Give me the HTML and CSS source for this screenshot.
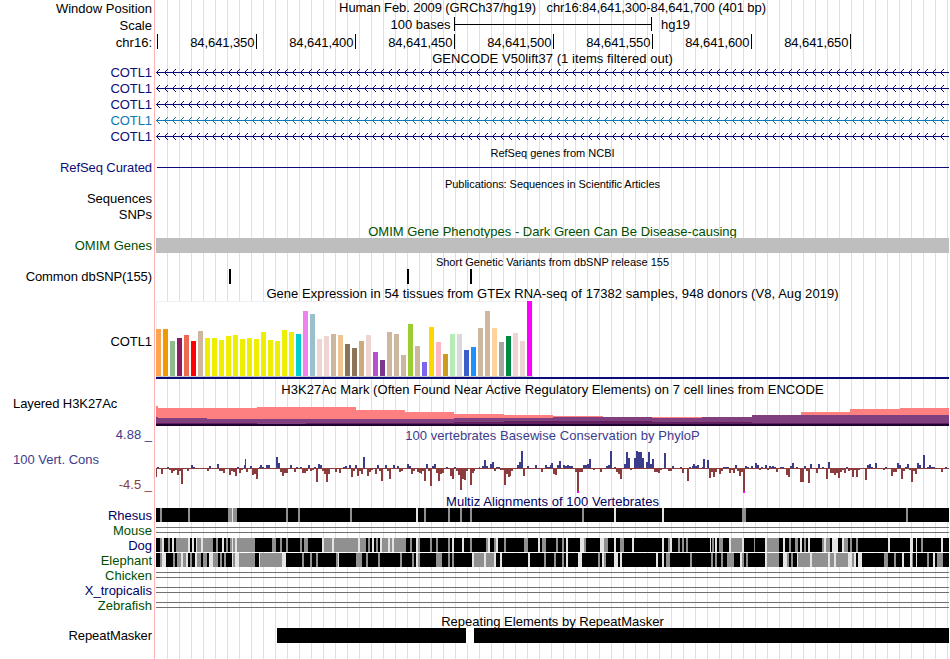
FILE: index.html
```html
<!DOCTYPE html>
<html lang="en">
<head>
<meta charset="utf-8">
<title>Human chr16:84,641,300-84,641,700</title>
<link rel="stylesheet" href="styles.css">
</head>
<body>
<main class="browser">
  <section class="row h17"><div class="label low">Window Position</div><div class="title pre tight">Human Feb. 2009 (GRCh37/hg19)   chr16:84,641,300-84,641,700 (401 bp)</div></section>
  <section class="row h17"><div class="label low">Scale</div><svg id="scale"></svg></section>
  <section class="row h17"><div class="label low">chr16:</div><svg id="ruler"></svg></section>
  <section class="row h14"><div></div><div class="title loose">GENCODE V50lift37 (1 items filtered out)</div></section>
  <section class="row h16 navy"><div class="label tight">COTL1</div><svg class="gene"></svg></section>
  <section class="row h16 navy"><div class="label tight">COTL1</div><svg class="gene"></svg></section>
  <section class="row h16 navy"><div class="label tight">COTL1</div><svg class="gene"></svg></section>
  <section class="row h16 azure"><div class="label tight">COTL1</div><svg class="gene"></svg></section>
  <section class="row h16 navy"><div class="label tight">COTL1</div><svg class="gene"></svg></section>
  <section class="row h15"><div></div><div class="title small">RefSeq genes from NCBI</div></section>
  <section class="row h16 navy"><div class="label tight">RefSeq Curated</div><svg id="refseq"></svg></section>
  <section class="row h15"><div></div><div class="title small tight">Publications: Sequences in Scientific Articles</div></section>
  <section class="row h16"><div class="label">Sequences</div></section>
  <section class="row h16"><div class="label">SNPs</div></section>
  <section class="row h15 green"><div></div><div class="title low">OMIM Gene Phenotypes - Dark Green Can Be Disease-causing</div></section>
  <section class="row h16 green"><div class="label">OMIM Genes</div><svg id="omim"></svg></section>
  <section class="row h15"><div></div><div class="title small">Short Genetic Variants from dbSNP release 155</div></section>
  <section class="row h16"><div class="label tight">Common dbSNP(155)</div><svg id="snp"></svg></section>
  <section class="row h16"><div></div><div class="title low loose">Gene Expression in 54 tissues from GTEx RNA-seq of 17382 samples, 948 donors (V8, Aug 2019)</div></section>
  <section class="row h79"><div class="label middle tight">COTL1</div><svg id="gtex"></svg></section>
  <section class="row h16"><div></div><div class="title lower loose">H3K27Ac Mark (Often Found Near Active Regulatory Elements) on 7 cell lines from ENCODE</div></section>
  <section class="row h32"><div class="label left tight">Layered H3K27Ac</div><svg id="h3k"></svg></section>
  <section class="row h66">
    <div class="axis">
      <div class="label blue">4.88 _</div>
      <div class="label left blue">100 Vert. Cons</div>
      <div class="label maroon">-4.5 _</div>
    </div>
    <div class="plot"><div class="title blue loose">100 vertebrates Basewise Conservation by PhyloP</div><svg id="cons"></svg></div>
  </section>
  <section class="row h14"><div></div><div class="title deep loose">Multiz Alignments of 100 Vertebrates</div></section>
  <section class="row h15"><div class="label deep">Rhesus</div><svg id="rhesus"></svg></section>
  <section class="row h15"><div class="label green">Mouse</div><svg class="gap"></svg></section>
  <section class="row h15"><div class="label deep">Dog</div><svg id="dog"></svg></section>
  <section class="row h15"><div class="label green">Elephant</div><svg id="elephant"></svg></section>
  <section class="row h15"><div class="label green">Chicken</div><svg class="gap"></svg></section>
  <section class="row h15"><div class="label deep">X_tropicalis</div><svg class="gap"></svg></section>
  <section class="row h15"><div class="label green">Zebrafish</div><svg class="gap"></svg></section>
  <section class="row h15"><div></div><div class="title low">Repeating Elements by RepeatMasker</div></section>
  <section class="row h31"><div class="label tight">RepeatMasker</div><svg id="repeats"></svg></section>
</main>
<script src="tracks.js"></script>
</body>
</html>
```
FILE: styles.css
```css
* { box-sizing: border-box; }
body { margin: 0; background: #fff; color: #000; font: 13px/15px "Liberation Sans", Arial, sans-serif; overflow: hidden; }
.browser {
  width: 950px;
  height: 659px;
  background:
    linear-gradient(#ffb4b4, #ffb4b4) 154px 0 / 1px 100% no-repeat,
    repeating-linear-gradient(90deg, transparent 0 11px, #dcdcff 11px 12px) 156px 0 / 793px 100% no-repeat;
}
.row { display: grid; grid-template-columns: 156px 793px; }
.h14 { height: 14px; } .h15 { height: 15px; } .h16 { height: 16px; } .h17 { height: 17px; }
.h31 { height: 31px; } .h32 { height: 32px; } .h66 { height: 66px; } .h79 { height: 79px; }
.label { padding-right: 4px; text-align: right; white-space: pre; }
.label.left { padding-left: 13px; text-align: left; }
.title { text-align: center; white-space: nowrap; }
.title.pre { white-space: pre; }
.small { font-size: 11px; padding-top: 1px; }
.tight { letter-spacing: -0.09px; }
.small.tight { letter-spacing: -0.06px; }
.loose { letter-spacing: 0.055px; }
.low { padding-top: 1px; }
.lower { padding-top: 2px; }
.middle { padding-top: 33px; }
.axis { display: grid; grid-template-rows: repeat(3, 25px); margin-top: -1px; height: 66px; }
.plot { display: grid; grid-template-rows: 14px 52px; }
.navy { color: #0c0c78; }
.azure { color: #0c78b4; }
.green { color: #005000; }
.blue { color: #3c3c8c; }
.maroon { color: #8c3c3c; }
.deep { color: #000064; }
svg { display: block; width: 793px; height: 100%; shape-rendering: crispEdges; overflow: hidden; }
svg text { font-size: 13px; fill: #000; }
#ruler text { letter-spacing: -0.09px; }
```
FILE: tracks.js
```js
const LEFT = 156, RIGHT = 949;

function prepare(svg) {
  const h = svg.parentNode.getBoundingClientRect().height - (svg.id === 'cons' ? 14 : 0);
  svg.setAttribute('viewBox', `${LEFT} 0 ${RIGHT - LEFT} ${h}`);
}
const rect = (x, y, w, h, fill) => `<rect x="${x}" y="${y}" width="${w}" height="${h}" fill="${fill}"/>`;
const text = (x, y, s, anchor) => `<text x="${x}" y="${y}" text-anchor="${anchor || 'start'}">${s}</text>`;
const put = (id, html) => { document.getElementById(id).innerHTML = html; };

document.querySelectorAll('svg').forEach(svg => {
  if (svg.id === 'cons') svg.setAttribute('viewBox', `${LEFT} 0 ${RIGHT - LEFT} 52`);
  else prepare(svg);
});

put('scale', text(450.5, 12, '100 bases', 'end') + rect(454, 0, 1, 14, '#000') + rect(455, 7, 197, 1, '#000') +
  rect(651, 0, 1, 14, '#000') + text(661, 12, 'hg19'));

put('ruler', rect(157, 0, 1, 15, '#000') +
  [256, 355, 454, 553, 652, 751, 850].map((x, i) =>
    rect(x, 0, 1, 15, '#000') + text(x - 1.6, 13, '84,641,' + (350 + i * 50), 'end')).join(''));

let gene = rect(LEFT, 7, 793, 1, 'currentColor');
for (let x = 156; x < RIGHT; x += 8)
  for (let d = 1; d < 4; d++)
    gene += rect(x + d, 7 - d, 1, 1, 'currentColor') + rect(x + d, 7 + d, 1, 1, 'currentColor');
document.querySelectorAll('.gene').forEach(s => { s.innerHTML = gene; });

put('refseq', rect(157, 7, 792, 1, 'currentColor'));
put('omim', rect(LEFT, 0, 793, 15, '#bebebe'));
put('snp', [229, 407, 470].map(x => rect(x, 0, 2, 15, '#000')).join(''));

const Y = '#eeee00', T = '#cdb79e', P = '#eed5d2';
const tissues = [
  [47, '#ffa54f'], [47, '#ee9a00'], [35, '#8fbc8f'], [38, '#8b1c62'], [41, '#ee6a50'], [35, '#ff0000'], [45, T],
  [38, Y], [38, Y], [36, Y], [40, Y], [41, Y], [37, Y], [38, Y], [37, Y], [44, Y], [36, Y], [35, Y], [46, Y], [44, Y],
  [42, '#00cdcd'], [65, '#ee82ee'], [62, '#9ac0cd'], [37, P], [40, P], [42, T], [41, '#eec591'], [32, '#8b7355'],
  [28, '#8b7355'], [35, '#cdaa7d'], [41, P], [24, '#b452cd'], [16, '#7a378b'], [44, T], [42, T], [21, T],
  [52, '#9acd32'], [30, T], [14, '#7a67ee'], [49, '#ffd700'], [34, '#ffb6c1'], [22, '#cd9b1d'], [42, '#b4eeb4'],
  [42, '#d9d9d9'], [26, '#3a5fcd'], [29, '#1e90ff'], [48, T], [65, T], [48, '#ffd39b'], [34, '#a6a6a6'],
  [40, '#008b45'], [43, P], [35, P], [75, '#ff00ff']];
put('gtex', rect(LEFT, 0, 377, 76, '#f0f0f0') + rect(157, 1, 375, 74, '#fff') + rect(LEFT, 75, 377, 1, '#c8c8c8') +
  tissues.map(([h, c], i) => rect(LEFT + 7 * i, 75 - h, 5, h, c)).join('') + rect(LEFT, 76, 793, 2, '#0c0c78'));

// Each layer: [start x, top y] steps that run to the next start.
const layers = [
  ['#ff8080', [[156, 10], [158, 12], [257, 11], [356, 14], [405, 16], [454, 18], [504, 19], [553, 20], [603, 21], [702, 21], [752, 19], [801, 16], [850, 13], [900, 12]]],
  ['#804080', [[156, 21], [158, 22], [207, 23], [356, 23], [454, 22], [553, 21], [603, 21], [652, 22], [702, 21], [752, 19]]],
  ['#602060', [[156, 27], [257, 28], [306, 27], [454, 26], [504, 25], [652, 26], [752, 27]]],
  ['#200030', [[156, 28]]]];
put('h3k', layers.map(([c, s]) => s.map(([x, y], i) =>
  rect(x, y, (s[i + 1] ? s[i + 1][0] : RIGHT) - x, 30 - y, c)).join('')).join(''));

// Conservation bars at a third of a pixel: start,end,edge; the axis lies at 84.
const cons = {
  150: '18,21,110 33,39,101 57,63,90 63,69,99 69,75,93 75,81,90 81,87,105 87,93,93 93,99,132 111,117,93 21,27,81 51,57,81 123,129,75 129,135,81 177,183,78 201,207,72 171,177,93 207,219,93 219,225,99 237,243,105 243,249,93 249,255,96 255,261,108 267,273,99 273,279,90 261,267,81 282,285,75 285,288,57 288,294,96 300,306,78 306,312,105 312,318,102 318,324,117 327,330,81 330,336,75 336,342,81 348,360,75 378,384,51 384,390,69 390,396,96 396,402,108 402,414,99 420,426,75 432,438,96 438,444,81 450,456,81 456,468,99 468,474,93 474,480,75 480,486,93 486,492,90 492,498,81 498,504,126 504,510,72 510,516,75 516,522,93 522,528,102 528,534,126 534,540,102 555,561,96 567,573,99 579,585,81 585,591,78 597,600,75',
  350: '0,3,75 3,9,111 9,15,93 15,21,75 21,27,108 27,33,93 33,39,102 39,45,51 51,57,108 57,63,96 63,69,90 75,81,102 81,87,75 87,93,93 93,99,123 105,111,75 111,117,93 117,123,117 129,135,75 141,147,78 147,153,96 153,159,93 171,177,72 177,183,78 183,189,102 189,195,93 201,207,96 207,213,99 213,216,102 216,222,93 222,228,123 228,234,72 234,240,93 240,246,138 246,252,78 252,258,72 258,264,99 264,270,123 270,276,102 276,282,99 288,294,81 300,306,108 306,312,117 312,318,81 318,324,93 324,330,105 330,336,150 336,342,117 342,348,120 348,354,93 360,366,135 366,372,99 372,375,93 387,390,81 396,402,78 402,408,60 408,414,78 420,426,72 426,432,66 432,438,93 438,450,81 450,462,90 462,468,135 468,474,102 474,480,111 480,483,108 483,489,93 501,507,75 507,513,66 513,519,33 519,525,108 531,537,78 555,561,75 573,579,96 585,591,75 591,600,81',
  550: '0,3,75 3,9,69 9,15,102 15,21,105 21,27,75 27,33,63 39,45,75 45,51,78 51,57,75 57,69,78 75,81,96 81,87,159 87,99,96 99,111,75 111,117,72 117,123,57 129,135,90 150,156,96 168,174,78 174,180,75 180,186,33 192,198,81 198,204,96 204,210,102 210,216,117 222,228,72 228,234,36 234,240,54 240,246,90 252,258,54 258,264,33 264,276,36 276,282,54 288,294,66 294,300,36 300,306,72 306,312,57 312,324,96 324,330,99 330,336,90 342,348,39 354,366,93 366,372,78 390,396,81 396,402,99 411,417,123 417,423,81 426,429,78 429,435,72 435,441,78 441,447,75 456,459,81 459,465,57 471,477,60 477,483,114 483,489,96 489,495,111 495,501,96 507,513,102 513,519,93 519,537,81 537,543,99 543,549,90 549,555,99 555,561,75 561,567,93 567,573,108 573,579,96 579,585,159 585,591,78 591,597,81',
  750: '3,9,78 15,21,69 21,27,75 27,33,90 33,39,81 45,51,75 51,57,90 57,63,78 63,69,81 66,72,78 72,78,81 78,84,96 90,102,81 108,114,105 114,120,111 120,126,78 126,132,69 138,144,81 150,162,126 162,168,78 168,174,93 174,180,129 180,186,72 198,204,99 204,210,72 216,222,81 228,234,117 234,240,66 240,252,99 252,258,105 258,264,99 264,270,114 270,276,96 276,282,90 282,288,99 288,294,81 294,300,93 300,306,90 306,312,111 312,318,90 318,324,111 324,330,90 345,351,120 351,357,75 357,363,72 363,369,81 375,381,69 399,405,90 405,411,81 423,429,108 429,441,96 441,447,69 447,453,75 453,459,117 459,465,93 465,471,81 471,477,72 477,483,90 483,489,126 489,495,93 495,501,102 501,507,69 507,513,75 519,525,45 531,537,81 537,543,75 543,555,81 573,579,96 585,591,81'
};
let bars = rect(LEFT, 26, 793, 1, '#8c3c3c');
for (const [x0, list] of Object.entries(cons))
  for (const item of list.split(' ')) {
    const [a, b, e] = item.split(',').map(Number);
    const x = +x0 + a / 3, w = (b - a) / 3, y = Math.round(e / 3) - 2;
    bars += e < 84 ? rect(x, y, w, 26 - y, '#3c3c8c') : rect(x, 26, w, y - 26, '#8c3c3c');
    if (e === 159) bars += rect(x, y - 2, w, 2, '#ff00ff');
  }
put('cons', bars);

// Alignment runs at a third of a pixel: g = partial, w = weak, over solid black.
const runs = {
  rhesus: {
    150: 'g30-36 g114-120 g234-246 w246-249 g249-261 g408-414 g444-450 g600-606 w798-804 g822-828 g894-900 g930-936 g960-966',
    550: 'g96-102 w192-198 w336-342 g576-588 g1068-1074'
  },
  dog: {
    150: 'g30-36 w36-42 g54-60 w66-72 g78-114 w114-120 w126-132 w138-141 g141-153 w153-159 g159-189 g198-204 w216-222 g228-234 g240-246 w246-249 g249-255 w255-261 g261-315 g366-378 g390-396 g408-414 g450-456 g462-474 w516-522 g522-546 w546-552 g552-624 w624-630 g630-648 g654-660 w666-672 g678-684 w690-696 g696-714 w714-720 g720-726 w726-732 g732-768 g780-786 w798-804 g804-810 g840-846 g858-864 g894-900 w906-912 w936-942 g960-966 g1008-1014 w1014-1020 g1032-1038 w1038-1044 g1062-1068 g1122-1134 w1164-1170 g1176-1188',
    550: 'g18-24 g36-42 w48-54 w90-102 g102-108 w150-162 g162-174 w192-198 g210-222 w246-252 w336-342 g354-360 w360-366 g384-390 g396-402 g408-414 w480-483 g486-492 w495-501 g507-519 w537-543 g543-576 w576-582 g612-615 w645-651 g651-687 w699-705 g717-723 g735-744 w750-756 g762-768 w774-780 g816-822 w822-828 g828-840 w846-852 w852-864 w876-882 g882-894 g900-906 g918-924 w1014-1020 w1080-1089 w1098-1101 g1113-1119 w1173-1179'
  },
  elephant: {
    150: 'g30-36 w36-48 g69-75 g81-93 w93-99 g99-108 w108-114 g120-126 w135-141 g141-153 g159-171 w177-189 g189-204 g210-216 g222-228 w246-249 g249-255 w255-261 g261-267 w261-267 g267-315 w327-330 g330-396 w396-408 g456-462 g480-486 g498-504 g558-564 w564-567 g618-636 g648-654 g684-690 g750-756 g786-792 w798-804 g804-810 g858-876 g894-900 g906-912 w966-972 g972-1002 w1002-1008 g1008-1032 w1032-1038 w1050-1056 w1134-1140 g1182-1188',
    550: 'g12-18 g36-42 w48-54 w84-96 g144-150 w156-162 g162-168 w192-204 w210-216 w318-324 w336-342 g348-360 g420-426 g483-489 g495-501 g513-519 g531-552 w570-576 g576-582 g588-594 w645-651 g651-687 w699-711 g711-717 g723-729 w741-744 g744-780 w780-786 g786-834 w834-840 g840-852 w852-858 g858-894 w894-906 g906-912 w912-918 w924-936 g1002-1014 g1032-1038 w1056-1062 w1080-1086 g1086-1089 w1098-1101 g1131-1137 w1149-1155 g1161-1179'
  }
};
for (const [id, parts] of Object.entries(runs)) {
  let out = rect(LEFT, 0, 793, 14, '#000');
  for (const [x0, list] of Object.entries(parts))
    for (const item of list.split(' ')) {
      const [a, b] = item.slice(1).split('-').map(Number);
      out += rect(+x0 + a / 3, 0, (b - a) / 3, 14, item[0] === 'g' ? '#909090' : '#e4e4e4');
    }
  put(id, out);
}
document.querySelectorAll('.gap').forEach(s => {
  s.innerHTML = rect(LEFT, 4, 793, 1, '#707070') + rect(LEFT, 9, 793, 1, '#707070');
});

put('repeats', rect(277, 0, 189, 15, '#000') + rect(466, 0, 8, 15, '#fff') + rect(474, 0, 475, 15, '#000'));
```
